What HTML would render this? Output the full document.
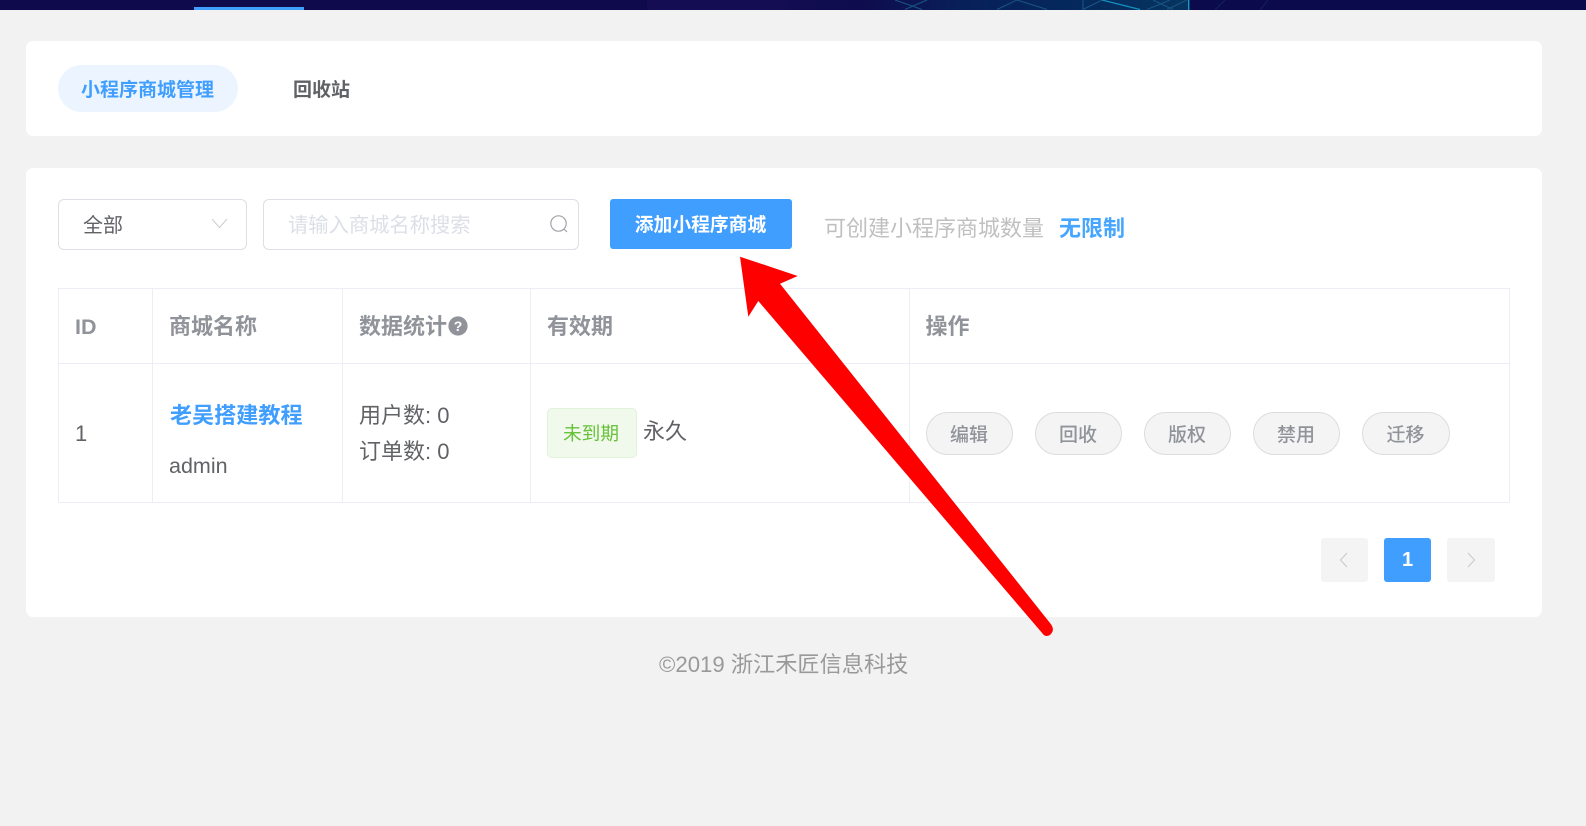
<!DOCTYPE html>
<html lang="zh">
<head>
<meta charset="utf-8">
<title>小程序商城管理</title>
<style>
html,body{margin:0;padding:0;width:1586px;height:826px;overflow:hidden;background:#f2f2f2;}
body{position:relative;font-family:"Liberation Sans","Noto Sans CJK SC",sans-serif;color:#606266;}
.a{position:absolute;box-sizing:border-box;white-space:nowrap;}
.c{display:flex;align-items:center;justify-content:center;}
.panel{background:#fff;border-radius:7px;left:26px;width:1516px;}
.line{background:#ebeef5;}
.th{font-size:22px;font-weight:700;color:#909399;line-height:30px;height:30px;top:312px;}
.td{font-size:22px;line-height:30px;height:30px;color:#606266;}
.btn{top:412px;height:43px;border:1px solid #dcdcdf;border-radius:22px;background:#f4f4f5;color:#909399;font-size:19px;font-weight:500;}
.btn span{position:relative;left:-.5px;top:-.5px;}
.pg{top:538px;height:44px;border-radius:3px;background:#f4f4f5;}
</style>
</head>
<body>
<svg class="a" style="left:0;top:0" width="1586" height="10" viewBox="0 0 1586 10">
<defs>
<linearGradient id="g" gradientUnits="userSpaceOnUse" x1="780" x2="1189" y1="0" y2="0">
<stop offset="0" stop-color="#130d52"/>
<stop offset=".2" stop-color="#0e0c4e"/>
<stop offset=".45" stop-color="#08205a"/>
<stop offset=".7" stop-color="#05285c"/>
<stop offset="1" stop-color="#06345f"/>
</linearGradient>
</defs>
<rect width="1586" height="10" fill="#0f0a4c"/>
<rect x="647" width="133" height="10" fill="#150d54"/>
<rect x="780" width="409" height="10" fill="url(#g)"/>
<rect x="1189" width="397" height="10" fill="#0a0a4c"/>
<path d="M895 0l27 9.5M927 0l-22 9.5M997 9.5L1017 0l30 9.5M1083 0v10M1083 9.5L1102 0M1147 9.5L1170 0M1187 0l-20 9.5M1153 0l20 9.5" stroke="#1a5585" stroke-width="1" fill="none"/>
<path d="M1102 0l38 9.5" stroke="#1390be" stroke-width="1.3" fill="none"/>
<rect x="1188" y="0" width="1.4" height="10" fill="#129cc6"/>
<path d="M1260 10l8-10M1215 10l10-10" stroke="#1a2a70" stroke-width="1" fill="none" opacity=".7"/>
<rect x="194" y="7" width="110" height="3" fill="#409eff"/>
</svg>

<div class="a panel" style="top:41px;height:95px"></div>
<div class="a c" style="left:58px;top:65px;width:180px;height:47px;border-radius:24px;background:#ecf5ff;color:#409eff;font-size:19px;font-weight:700"><span style="position:relative;left:-.5px">小程序商城管理</span></div>
<div class="a" style="left:293px;top:76.5px;font-size:19px;line-height:28px;font-weight:700;color:#606266">回收站</div>

<div class="a panel" style="top:168px;height:449px"></div>

<div class="a" style="left:58px;top:199px;width:189px;height:51px;border:1px solid #dcdfe6;border-radius:6px"></div>
<div class="a" style="left:83px;top:211px;font-size:20px;line-height:30px;color:#606266">全部</div>
<svg class="a" style="left:210px;top:217px" width="19" height="13" viewBox="0 0 19 13"><path d="M2 2l7.5 8.5L17 2" fill="none" stroke="#c8ccd3" stroke-width="1"/></svg>

<div class="a" style="left:263px;top:199px;width:316px;height:51px;border:1px solid #dcdfe6;border-radius:6px"></div>
<div class="a" style="left:288px;top:211px;font-size:20.3px;line-height:30px;color:#dcdfe6">请输入商城名称搜索</div>
<svg class="a" style="left:548px;top:213px" width="22" height="22" viewBox="0 0 22 22"><circle cx="10.5" cy="10.5" r="7.7" fill="none" stroke="#a0a3a9" stroke-width="1.2"/><path d="M16 16l3 3" stroke="#a0a3a9" stroke-width="1.2" fill="none"/></svg>

<div class="a c" style="left:610px;top:199px;width:182px;height:50px;border-radius:3px;background:#409eff;color:#fff;font-size:18.8px;font-weight:700"><span style="position:relative;top:-1px;left:-.5px">添加小程序商城</span></div>
<div class="a" style="left:824px;top:214px;font-size:22px;line-height:30px;color:#c0c0c0">可创建小程序商城数量</div>
<div class="a" style="left:1059px;top:214px;font-size:22px;line-height:30px;font-weight:700;color:#46a6ff">无限制</div>

<!-- table lines -->
<div class="a line" style="left:58px;top:288px;width:1452px;height:1px"></div>
<div class="a line" style="left:58px;top:363px;width:1452px;height:1px"></div>
<div class="a line" style="left:58px;top:502px;width:1452px;height:1px"></div>
<div class="a line" style="left:58px;top:288px;width:1px;height:215px"></div>
<div class="a line" style="left:152px;top:288px;width:1px;height:215px"></div>
<div class="a line" style="left:342px;top:288px;width:1px;height:215px"></div>
<div class="a line" style="left:530px;top:288px;width:1px;height:215px"></div>
<div class="a line" style="left:909px;top:288px;width:1px;height:215px"></div>
<div class="a line" style="left:1509px;top:288px;width:1px;height:215px"></div>

<div class="a th" style="left:75px;font-size:21.5px">ID</div>
<div class="a th" style="left:169px">商城名称</div>
<div class="a th" style="left:359px">数据统计</div>
<svg class="a" style="left:448px;top:316px" width="20" height="20" viewBox="0 0 20 20"><circle cx="10" cy="10" r="9.6" fill="#909399"/><text x="10" y="15" text-anchor="middle" font-family="Liberation Sans" font-size="14" font-weight="700" fill="#fff">?</text></svg>
<div class="a th" style="left:547px">有效期</div>
<div class="a th" style="left:925.5px">操作</div>

<div class="a td" style="left:75px;top:418.5px">1</div>
<div class="a td" style="left:170px;top:400.5px;font-size:22.1px;font-weight:700;color:#409eff">老吴搭建教程</div>
<div class="a td" style="left:169px;top:451px;font-size:21.5px">admin</div>
<div class="a td" style="left:359px;top:401px">用户数: 0</div>
<div class="a td" style="left:359px;top:437px">订单数: 0</div>
<div class="a c" style="left:547px;top:408px;width:90px;height:50px;background:#f0f9eb;border:1px solid #e1f3d8;border-radius:5px;color:#67c23a;font-size:18.7px"><span style="position:relative;left:-1px;top:-.5px">未到期</span></div>
<div class="a td" style="left:643px;top:417px">永久</div>

<div class="a btn c" style="left:926px;width:87px"><span>编辑</span></div>
<div class="a btn c" style="left:1035px;width:87px"><span>回收</span></div>
<div class="a btn c" style="left:1144px;width:87px"><span>版权</span></div>
<div class="a btn c" style="left:1253px;width:87px"><span>禁用</span></div>
<div class="a btn c" style="left:1362px;width:88px"><span>迁移</span></div>

<div class="a pg" style="left:1321px;width:47px"></div>
<svg class="a" style="left:1337px;top:551px" width="14" height="18" viewBox="0 0 14 18"><path d="M10 2L3.5 9l6.5 7" fill="none" stroke="#c8ccd3" stroke-width="1.2"/></svg>
<div class="a pg c" style="left:1384px;width:47px;background:#409eff;color:#fff;font-size:20px;font-weight:700">1</div>
<div class="a pg" style="left:1447px;width:48px"></div>
<svg class="a" style="left:1464px;top:551px" width="14" height="18" viewBox="0 0 14 18"><path d="M4 2l6.5 7L4 16" fill="none" stroke="#c8ccd3" stroke-width="1.2"/></svg>

<div class="a" style="left:659px;top:650px;font-size:22.2px;line-height:30px;color:#999">©2019 浙江禾匠信息科技</div>

<svg class="a" style="left:0;top:0;pointer-events:none" width="1586" height="826" viewBox="0 0 1586 826">
<path d="M740 256.7L797.7 276 780 283.7 1050 623Q1054 628 1052.5 631.5 1050.5 636 1046.5 636 1044 636 1041.7 632.5L758.3 301 748.3 316.7Z" fill="#ff0000"/>
</svg>
</body>
</html>
